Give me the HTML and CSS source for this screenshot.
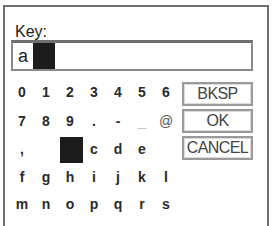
FILE: index.html
```html
<!DOCTYPE html>
<html lang="en">
<head>
    <meta charset="UTF-8">
    <title>Key entry</title>
    <link rel="stylesheet" href="styles.css">
</head>
<body>
<div class="screen">
    <div class="screen__label">Key:</div>
    <div class="key-input">
        <span class="key-input__text">a</span>
        <span class="key-input__cursor"></span>
    </div>
    <div class="keypad">
        <div class="keypad__chars">
            <span class="char">0</span><span class="char">1</span><span class="char">2</span><span class="char">3</span><span class="char">4</span><span class="char">5</span><span class="char">6</span>
            <span class="char">7</span><span class="char">8</span><span class="char">9</span><span class="char">.</span><span class="char">-</span><span class="char char--faint">_</span><span class="char char--at">@</span>
            <span class="char">,</span><span class="char"></span><span class="char char--selected">b</span><span class="char">c</span><span class="char">d</span><span class="char">e</span><span class="char"></span>
            <span class="char">f</span><span class="char">g</span><span class="char">h</span><span class="char">i</span><span class="char">j</span><span class="char">k</span><span class="char">l</span>
            <span class="char">m</span><span class="char">n</span><span class="char">o</span><span class="char">p</span><span class="char">q</span><span class="char">r</span><span class="char">s</span>
        </div>
        <div class="keypad__actions">
            <button class="action-button">BKSP</button>
            <button class="action-button">OK</button>
            <button class="action-button">CANCEL</button>
        </div>
    </div>
</div>
</body>
</html>
```
FILE: styles.css
```css
* {
    box-sizing: border-box;
}
html, body {
    margin: 0;
    padding: 0;
    height: 100%;
    overflow: hidden;
    background: #fff;
}
body {
    font-family: "Liberation Sans", Arial, sans-serif;
    color: #222;
}
.screen {
    margin: 5px 0 0 3px;
    width: 266px;
    height: 221px;
    padding: 17px 0 0 6px;
    border: 2px solid #6f6f6f;
    border-bottom: none;
}
.screen__label {
    padding-left: 4px;
    font-size: 16px;
    line-height: 17px;
    height: 17px;
    margin-top: -1px;
}
.key-input {
    display: flex;
    align-items: center;
    width: 242px;
    height: 31px;
    border: 2px solid #8a8a8a;
    border-top: 3px solid #6f6f6f;
}
.key-input__text {
    width: 20px;
    padding-left: 5px;
    font-size: 18px;
    line-height: 26px;
}
.key-input__cursor {
    width: 22px;
    height: 26px;
    background: #1c1c1c;
}
.keypad {
    display: flex;
    margin-top: 7px;
}
.keypad__chars {
    display: grid;
    grid-template-columns: repeat(7, 24px);
    grid-template-rows: 28px 29px 28px 27px 28px;
    margin-left: -1px;
}
.char {
    display: flex;
    align-items: center;
    justify-content: center;
    font-size: 14px;
    font-weight: bold;
    color: #2a2a2a;
}
.char--faint {
    color: #c4c4c4;
    font-weight: normal;
}
.char--at {
    color: #555;
    font-weight: normal;
}
.char--selected {
    margin: 2px 0 0 2px;
    width: 23px;
    height: 26px;
    background: #1c1c1c;
    color: #1c1c1c;
}
.keypad__actions {
    display: flex;
    flex-direction: column;
    gap: 3px;
    margin: 4px 0 0 4px;
}
.action-button {
    width: 71px;
    height: 24px;
    padding: 0;
    border: 2px solid #9a9a9a;
    box-shadow: inset 0 0 0 1px #dcdcdc;
    background: #fff;
    font-family: "Liberation Sans", Arial, sans-serif;
    font-size: 16px;
    letter-spacing: -0.6px;
    line-height: 18px;
    color: #444;
}
```
